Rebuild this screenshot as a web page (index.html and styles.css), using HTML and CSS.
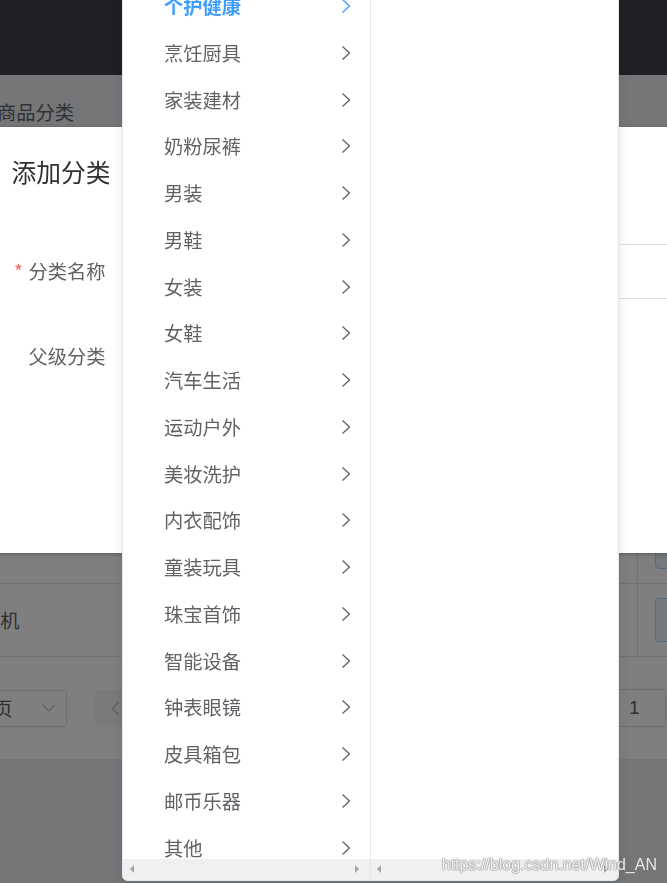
FILE: index.html
```html
<!DOCTYPE html>
<html lang="zh-CN">
<head>
<meta charset="utf-8">
<title>商品分类</title>
<link rel="stylesheet" href="styles.css">
</head>
<body>
<div class="app">
  <header class="topbar"></header>
  <main class="main">
    <nav class="crumbs"><span class="crumb-prev">首页 / 商品管理 / </span><span class="crumb-cur">商品分类</span></nav>
    <section class="card">
      <div class="toolbar"><button class="btn btn-primary">添加分类</button></div>
      <div class="table">
        <div class="trow thead"><div class="cell">#</div><div class="cell">分类名称</div><div class="cell">是否有效</div><div class="cell">操作</div></div>
        <div class="trow"><div class="cell">1</div><div class="cell">大家电</div><div class="cell">是</div><div class="cell"><span class="btn-plain">编辑</span></div></div>
        <div class="trow"><div class="cell">2</div><div class="cell">热门推荐</div><div class="cell">是</div><div class="cell"><span class="btn-plain">编辑</span></div></div>
        <div class="trow"><div class="cell">3</div><div class="cell">海外购</div><div class="cell">是</div><div class="cell"><span class="btn-plain">编辑</span></div></div>
        <div class="trow"><div class="cell">4</div><div class="cell">书</div><div class="cell">是</div><div class="cell"><span class="btn-plain">编辑</span></div></div>
        <div class="trow"><div class="cell">5</div><div class="cell">手机</div><div class="cell">是</div><div class="cell"><span class="btn-plain">编辑</span></div></div>
      </div>
      <div class="pager">
        <span class="total">共 5 条</span>
        <div class="sizes"><span>10条/页</span>
          <svg class="ico-down" viewBox="0 0 14 8" width="14" height="8"><path d="M1 1 L7 7 L13 1" fill="none" stroke="currentColor" stroke-width="1.2"/></svg>
        </div>
        <div class="pbtn prev"><svg viewBox="0 0 9 15" width="9" height="15"><path d="M7.5 1 L1.5 7.5 L7.5 14" fill="none" stroke="currentColor" stroke-width="1.6"/></svg></div>
        <div class="pbtn num active">1</div>
        <div class="pbtn next"><svg viewBox="0 0 9 15" width="9" height="15"><path d="M1.5 1 L7.5 7.5 L1.5 14" fill="none" stroke="currentColor" stroke-width="1.6"/></svg></div>
        <div class="jumper"><span>前往</span><span class="jump-input">1</span><span>页</span></div>
      </div>
    </section>
  </main>
</div>

<div class="overlay"></div>

<div class="dialog">
  <div class="dialog-header"><span class="dialog-title">添加分类</span></div>
  <div class="dialog-body">
    <div class="form-item">
      <label class="form-label"><span class="req">*</span>分类名称</label>
      <div class="input"></div>
    </div>
    <div class="form-item">
      <label class="form-label">父级分类</label>
      <div class="input narrow"></div>
    </div>
  </div>
</div>

<div class="cascader">
  <div class="menu">
    <div class="menu-wrap">
      <ul class="menu-list">
        <li class="node active"><span class="node-label">个护健康</span><svg class="arr" viewBox="0 0 10 16" width="10" height="16"><path d="M1.5 1.5 L8.5 8 L1.5 14.5" fill="none" stroke="currentColor" stroke-width="1.3"/></svg></li>
        <li class="node"><span class="node-label">烹饪厨具</span><svg class="arr" viewBox="0 0 10 16" width="10" height="16"><path d="M1.5 1.5 L8.5 8 L1.5 14.5" fill="none" stroke="currentColor" stroke-width="1.3"/></svg></li>
        <li class="node"><span class="node-label">家装建材</span><svg class="arr" viewBox="0 0 10 16" width="10" height="16"><path d="M1.5 1.5 L8.5 8 L1.5 14.5" fill="none" stroke="currentColor" stroke-width="1.3"/></svg></li>
        <li class="node"><span class="node-label">奶粉尿裤</span><svg class="arr" viewBox="0 0 10 16" width="10" height="16"><path d="M1.5 1.5 L8.5 8 L1.5 14.5" fill="none" stroke="currentColor" stroke-width="1.3"/></svg></li>
        <li class="node"><span class="node-label">男装</span><svg class="arr" viewBox="0 0 10 16" width="10" height="16"><path d="M1.5 1.5 L8.5 8 L1.5 14.5" fill="none" stroke="currentColor" stroke-width="1.3"/></svg></li>
        <li class="node"><span class="node-label">男鞋</span><svg class="arr" viewBox="0 0 10 16" width="10" height="16"><path d="M1.5 1.5 L8.5 8 L1.5 14.5" fill="none" stroke="currentColor" stroke-width="1.3"/></svg></li>
        <li class="node"><span class="node-label">女装</span><svg class="arr" viewBox="0 0 10 16" width="10" height="16"><path d="M1.5 1.5 L8.5 8 L1.5 14.5" fill="none" stroke="currentColor" stroke-width="1.3"/></svg></li>
        <li class="node"><span class="node-label">女鞋</span><svg class="arr" viewBox="0 0 10 16" width="10" height="16"><path d="M1.5 1.5 L8.5 8 L1.5 14.5" fill="none" stroke="currentColor" stroke-width="1.3"/></svg></li>
        <li class="node"><span class="node-label">汽车生活</span><svg class="arr" viewBox="0 0 10 16" width="10" height="16"><path d="M1.5 1.5 L8.5 8 L1.5 14.5" fill="none" stroke="currentColor" stroke-width="1.3"/></svg></li>
        <li class="node"><span class="node-label">运动户外</span><svg class="arr" viewBox="0 0 10 16" width="10" height="16"><path d="M1.5 1.5 L8.5 8 L1.5 14.5" fill="none" stroke="currentColor" stroke-width="1.3"/></svg></li>
        <li class="node"><span class="node-label">美妆洗护</span><svg class="arr" viewBox="0 0 10 16" width="10" height="16"><path d="M1.5 1.5 L8.5 8 L1.5 14.5" fill="none" stroke="currentColor" stroke-width="1.3"/></svg></li>
        <li class="node"><span class="node-label">内衣配饰</span><svg class="arr" viewBox="0 0 10 16" width="10" height="16"><path d="M1.5 1.5 L8.5 8 L1.5 14.5" fill="none" stroke="currentColor" stroke-width="1.3"/></svg></li>
        <li class="node"><span class="node-label">童装玩具</span><svg class="arr" viewBox="0 0 10 16" width="10" height="16"><path d="M1.5 1.5 L8.5 8 L1.5 14.5" fill="none" stroke="currentColor" stroke-width="1.3"/></svg></li>
        <li class="node"><span class="node-label">珠宝首饰</span><svg class="arr" viewBox="0 0 10 16" width="10" height="16"><path d="M1.5 1.5 L8.5 8 L1.5 14.5" fill="none" stroke="currentColor" stroke-width="1.3"/></svg></li>
        <li class="node"><span class="node-label">智能设备</span><svg class="arr" viewBox="0 0 10 16" width="10" height="16"><path d="M1.5 1.5 L8.5 8 L1.5 14.5" fill="none" stroke="currentColor" stroke-width="1.3"/></svg></li>
        <li class="node"><span class="node-label">钟表眼镜</span><svg class="arr" viewBox="0 0 10 16" width="10" height="16"><path d="M1.5 1.5 L8.5 8 L1.5 14.5" fill="none" stroke="currentColor" stroke-width="1.3"/></svg></li>
        <li class="node"><span class="node-label">皮具箱包</span><svg class="arr" viewBox="0 0 10 16" width="10" height="16"><path d="M1.5 1.5 L8.5 8 L1.5 14.5" fill="none" stroke="currentColor" stroke-width="1.3"/></svg></li>
        <li class="node"><span class="node-label">邮币乐器</span><svg class="arr" viewBox="0 0 10 16" width="10" height="16"><path d="M1.5 1.5 L8.5 8 L1.5 14.5" fill="none" stroke="currentColor" stroke-width="1.3"/></svg></li>
        <li class="node"><span class="node-label">其他</span><svg class="arr" viewBox="0 0 10 16" width="10" height="16"><path d="M1.5 1.5 L8.5 8 L1.5 14.5" fill="none" stroke="currentColor" stroke-width="1.3"/></svg></li>
      </ul>
    </div>
    <div class="hbar"><span class="tri tri-l"></span><span class="tri tri-r"></span></div>
  </div>
  <div class="menu">
    <div class="menu-wrap"></div>
    <div class="hbar"><span class="tri tri-l"></span><span class="tri tri-r"></span></div>
  </div>
</div>

<div class="watermark">https://blog.csdn.net/Wind_AN</div>
</body>
</html>
```

FILE: styles.css
```css
* { box-sizing: border-box; }
html, body { margin: 0; padding: 0; }
body {
  width: 667px;
  height: 883px;
  overflow: hidden;
  position: relative;
  background: #eaedf1;
  font-family: "Noto Sans CJK SC", "Noto Sans", sans-serif;
  color: #606266;
}

/* ---------- page under the modal ---------- */
.app { margin-left: -200px; width: 1040px; }
.topbar { height: 75px; background: #3c4146; }
.crumbs {
  height: 52px;
  padding: 24px 0 0 40px;
  font-size: 19.25px;
  line-height: 26px;
  white-space: nowrap;
  color: #606266;
}
.crumb-prev { display: inline-block; width: 157px; overflow: hidden; vertical-align: top; color: #909399; }
.crumb-cur { color: #606266; }

.card {
  margin: 20px 0 0 20px;
  width: 1000px;
  background: #fff;
  border-radius: 4px;
  padding: 20px 20px 32px;
}
.toolbar { height: 55px; margin-bottom: 20px; }
.btn {
  height: 44px;
  padding: 0 27px;
  border-radius: 4px;
  font: inherit;
  font-size: 19px;
}
.btn-primary { background: #409eff; border: 1px solid #409eff; color: #fff; }

.table { border-left: 1px solid #e3e6ec; border-top: 1px solid #e3e6ec; }
.trow {
  display: grid;
  grid-template-columns: 126px 334px 337px 163px;
  height: 73px;
  border-bottom: 1px solid #e1e4ea;
  font-size: 19.25px;
  color: #606266;
}
.trow.thead { height: 49px; color: #909399; font-weight: 700; }
.cell {
  border-right: 1px solid #e3e6ec;
  padding: 0 14px;
  display: flex;
  align-items: center;
}
.trow .cell:nth-child(4) { padding-left: 17px; }
.btn-plain {
  display: inline-flex;
  align-items: center;
  height: 44px;
  padding: 0 20px;
  background: #e8f2fd;
  border: 1px solid #b8d3f0;
  border-radius: 4px;
  color: #409eff;
  font-size: 17px;
}

.pager {
  display: flex;
  align-items: center;
  height: 38px;
  margin-top: 32px;
  width: 853px;
  font-size: 19.25px;
  color: #606266;
}
.total { width: 90px; flex: none; }
.sizes {
  flex: none;
  width: 137px;
  height: 37px;
  border: 1px solid #dcdfe6;
  border-radius: 4px;
  display: flex;
  align-items: center;
  justify-content: space-between;
  padding: 0 10px 0 14px;
  color: #606266;
}
.ico-down { color: #c0c4cc; }
.pbtn {
  flex: none;
  width: 41px;
  height: 37px;
  margin-right: 14px;
  background: #f4f4f5;
  border-radius: 3px;
  display: flex;
  align-items: center;
  justify-content: center;
  color: #c0c4cc;
}
.pbtn.prev { margin-left: 28px; }
.pbtn.active { background: #409eff; color: #fff; }
.jumper { margin-left: auto; display: flex; align-items: center; }
.jump-input {
  width: 63px;
  height: 38px;
  margin: 0 8px;
  border: 1px solid #dcdfe6;
  border-radius: 4px;
  display: flex;
  align-items: center;
  justify-content: center;
  font-family: "Liberation Sans", Arial, sans-serif;
  font-size: 19px;
  color: #606266;
}

/* ---------- modal ---------- */
.overlay { position: fixed; inset: 0; background: rgba(0, 0, 0, 0.5); }

.dialog {
  position: absolute;
  top: 127px;
  left: -16px;
  width: 1000px;
  height: 426px;
  background: #fff;
  border-radius: 3px;
  box-shadow: 0 1px 4px rgba(0, 0, 0, 0.3);
}
.dialog-header { padding: 27.5px 27.5px 13.5px; }
.dialog-title { display: block; font-size: 24.75px; line-height: 33px; color: #303133; }
.dialog-body { padding: 43px 27.5px 0 0; }
.form-item { display: flex; margin-bottom: 30.25px; }
.form-label {
  flex: none;
  width: 138px;
  padding-right: 16.5px;
  text-align: right;
  line-height: 55px;
  font-size: 19.25px;
  color: #606266;
}
.req { color: #f56c6c; margin-right: 5.5px; }
.input {
  flex: 1;
  height: 55px;
  border: 1px solid #dcdfe6;
  border-radius: 5.5px;
  background: #fff;
}
.input.narrow { flex: none; width: 305px; }

/* ---------- cascader dropdown ---------- */
.cascader {
  position: absolute;
  left: 122px;
  top: -26.5px;
  width: 497px;
  height: 907px;
  background: #fff;
  border: 1px solid #e4e7ed;
  border-radius: 5.5px;
  box-shadow: 0 2px 12px rgba(0, 0, 0, 0.1);
  display: flex;
  overflow: hidden;
}
.menu {
  width: 247.5px;
  flex: none;
  border-right: 1px solid #e4e7ed;
  display: flex;
  flex-direction: column;
}
.menu:last-child { flex: 1; border-right: none; }
.menu-wrap { flex: 1; min-height: 0; overflow: hidden; }
.menu-list { list-style: none; margin: 0; padding: 8.25px 0; }
.node {
  height: 46.75px;
  display: flex;
  align-items: center;
  padding: 0 19px 0 41px;
  font-size: 19.25px;
  color: #606266;
}
.node-label { flex: 1; white-space: nowrap; }
.node .arr { flex: none; }
.node.active { color: #409eff; font-weight: 700; }

.hbar {
  flex: none;
  height: 21px;
  background: #f0f0f0;
  display: flex;
  align-items: center;
  justify-content: space-between;
  padding: 0 10.5px 0 6.5px;
}
.tri { width: 0; height: 0; border-top: 4px solid transparent; border-bottom: 4px solid transparent; }
.tri-l { border-right: 4px solid #a3a3a3; }
.tri-r { border-left: 4px solid #a3a3a3; }

.watermark {
  position: absolute;
  right: 10px;
  bottom: 10px;
  font-family: "Liberation Sans", Arial, sans-serif;
  font-size: 16px;
  line-height: 17px;
  color: rgba(255, 255, 255, 0.85);
  text-shadow:
    -1px 0 rgba(110, 110, 110, 0.35),
    1px 0 rgba(110, 110, 110, 0.35),
    0 -1px rgba(110, 110, 110, 0.35),
    0 1px rgba(110, 110, 110, 0.35);
  white-space: nowrap;
}
```
